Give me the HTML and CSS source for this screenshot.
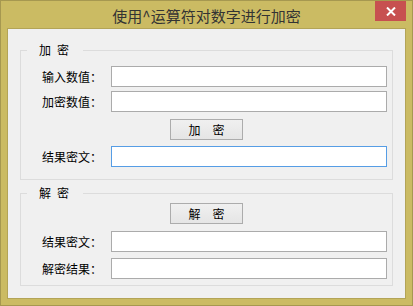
FILE: index.html
```html
<!DOCTYPE html>
<html lang="zh-CN">
<head>
<meta charset="utf-8">
<title>使用^运算符对数字进行加密</title>
<link rel="stylesheet" href="styles.css">
</head>
<body>
<div class="window">
  <div class="titlebar">
    <span class="spacer"></span>
    <span class="title">使用^运算符对数字进行加密</span>
    <span class="controls">
      <button class="close" aria-label="关闭">
        <svg width="10" height="9" viewBox="0 0 10 9"><path d="M1 0.5 L9 8.5 M9 0.5 L1 8.5" stroke="#fff" stroke-width="2" fill="none"/></svg>
      </button>
    </span>
  </div>
  <div class="client">
    <fieldset class="group g-enc">
      <legend>加&ensp;密</legend>
      <div class="rows">
        <div class="row"><label>输入数值：</label><input class="field" type="text"></div>
        <div class="row r-gap4"><label>加密数值：</label><input class="field" type="text"></div>
        <div class="btn-row r-gap7"><button class="btn">加&ensp;&ensp;密</button></div>
        <div class="row r-gap6"><label>结果密文：</label><input class="field focus" type="text"></div>
      </div>
    </fieldset>
    <fieldset class="group g-dec">
      <legend>解&ensp;密</legend>
      <div class="rows">
        <div class="btn-row"><button class="btn">解&ensp;&ensp;密</button></div>
        <div class="row r-gap7"><label>结果密文：</label><input class="field" type="text"></div>
        <div class="row r-gap6"><label>解密结果：</label><input class="field" type="text"></div>
      </div>
    </fieldset>
  </div>
</div>
</body>
</html>
```

FILE: styles.css
```css
* { box-sizing: border-box; }
html, body { margin: 0; padding: 0; }
body {
  width: 413px;
  height: 306px;
  overflow: hidden;
  font-family: "Noto Sans CJK SC", "Noto Sans", sans-serif;
}
.window {
  width: 413px;
  height: 306px;
  background: #cbbb63;
  border: 1px solid #a69850;
  padding: 0 6px 6px 6px;
  display: flex;
  flex-direction: column;
}
.titlebar {
  height: 27px;
  display: grid;
  grid-template-columns: 1fr auto 1fr;
  align-items: start;
}
.title {
  font-size: 15px;
  line-height: 27px;
  color: #333;
  white-space: nowrap;
  padding-top: 1px;
}
.controls {
  justify-self: end;
  display: flex;
}
.close {
  width: 31px;
  height: 20px;
  border: 0;
  padding: 0;
  margin: 0;
  background: #c75050;
  display: flex;
  align-items: center;
  justify-content: center;
}
.close svg { display: block; }
.client {
  flex: 1;
  background: #f0f0f0;
  border: 1px solid #b3a457;
  padding: 14px 12px 0 12px;
  display: flex;
  flex-direction: column;
}
.group {
  margin: 0;
  padding: 0;
  border: 1px solid #dcdcdc;
  min-width: 0;
}
.group legend {
  margin-left: 6px;
  padding: 0 14px 0 12px;
  font-size: 12px;
  line-height: 14px;
  height: 14px;
  color: #000;
}
.g-enc .rows { padding: 9px 5px 12px 21px; }
.g-dec { margin-top: 6px; }
.g-dec .rows { padding: 3px 5px 6px 21px; }
.rows {
  display: flex;
  flex-direction: column;
}
.row {
  display: flex;
  align-items: center;
  height: 21px;
}
.row label {
  width: 69px;
  font-size: 12px;
  line-height: 14px;
  color: #000;
  white-space: nowrap;
}
.field {
  flex: 1;
  height: 21px;
  margin: 0;
  border: 1px solid #ababab;
  background: #fff;
  outline: none;
  padding: 0 3px;
  font: inherit;
}
.field.focus { border-color: #569de5; }
.r-gap4 { margin-top: 4px; }
.r-gap6 { margin-top: 6px; }
.r-gap7 { margin-top: 7px; }
.btn-row {
  display: flex;
  justify-content: center;
  padding-right: 16px;
}
.btn {
  width: 73px;
  height: 21px;
  margin: 0;
  padding: 0;
  border: 1px solid #acacac;
  background: linear-gradient(#f0f0f0, #e5e5e5);
  font-family: "Noto Sans CJK SC", sans-serif;
  font-size: 12px;
  line-height: 19px;
  color: #000;
}
```
